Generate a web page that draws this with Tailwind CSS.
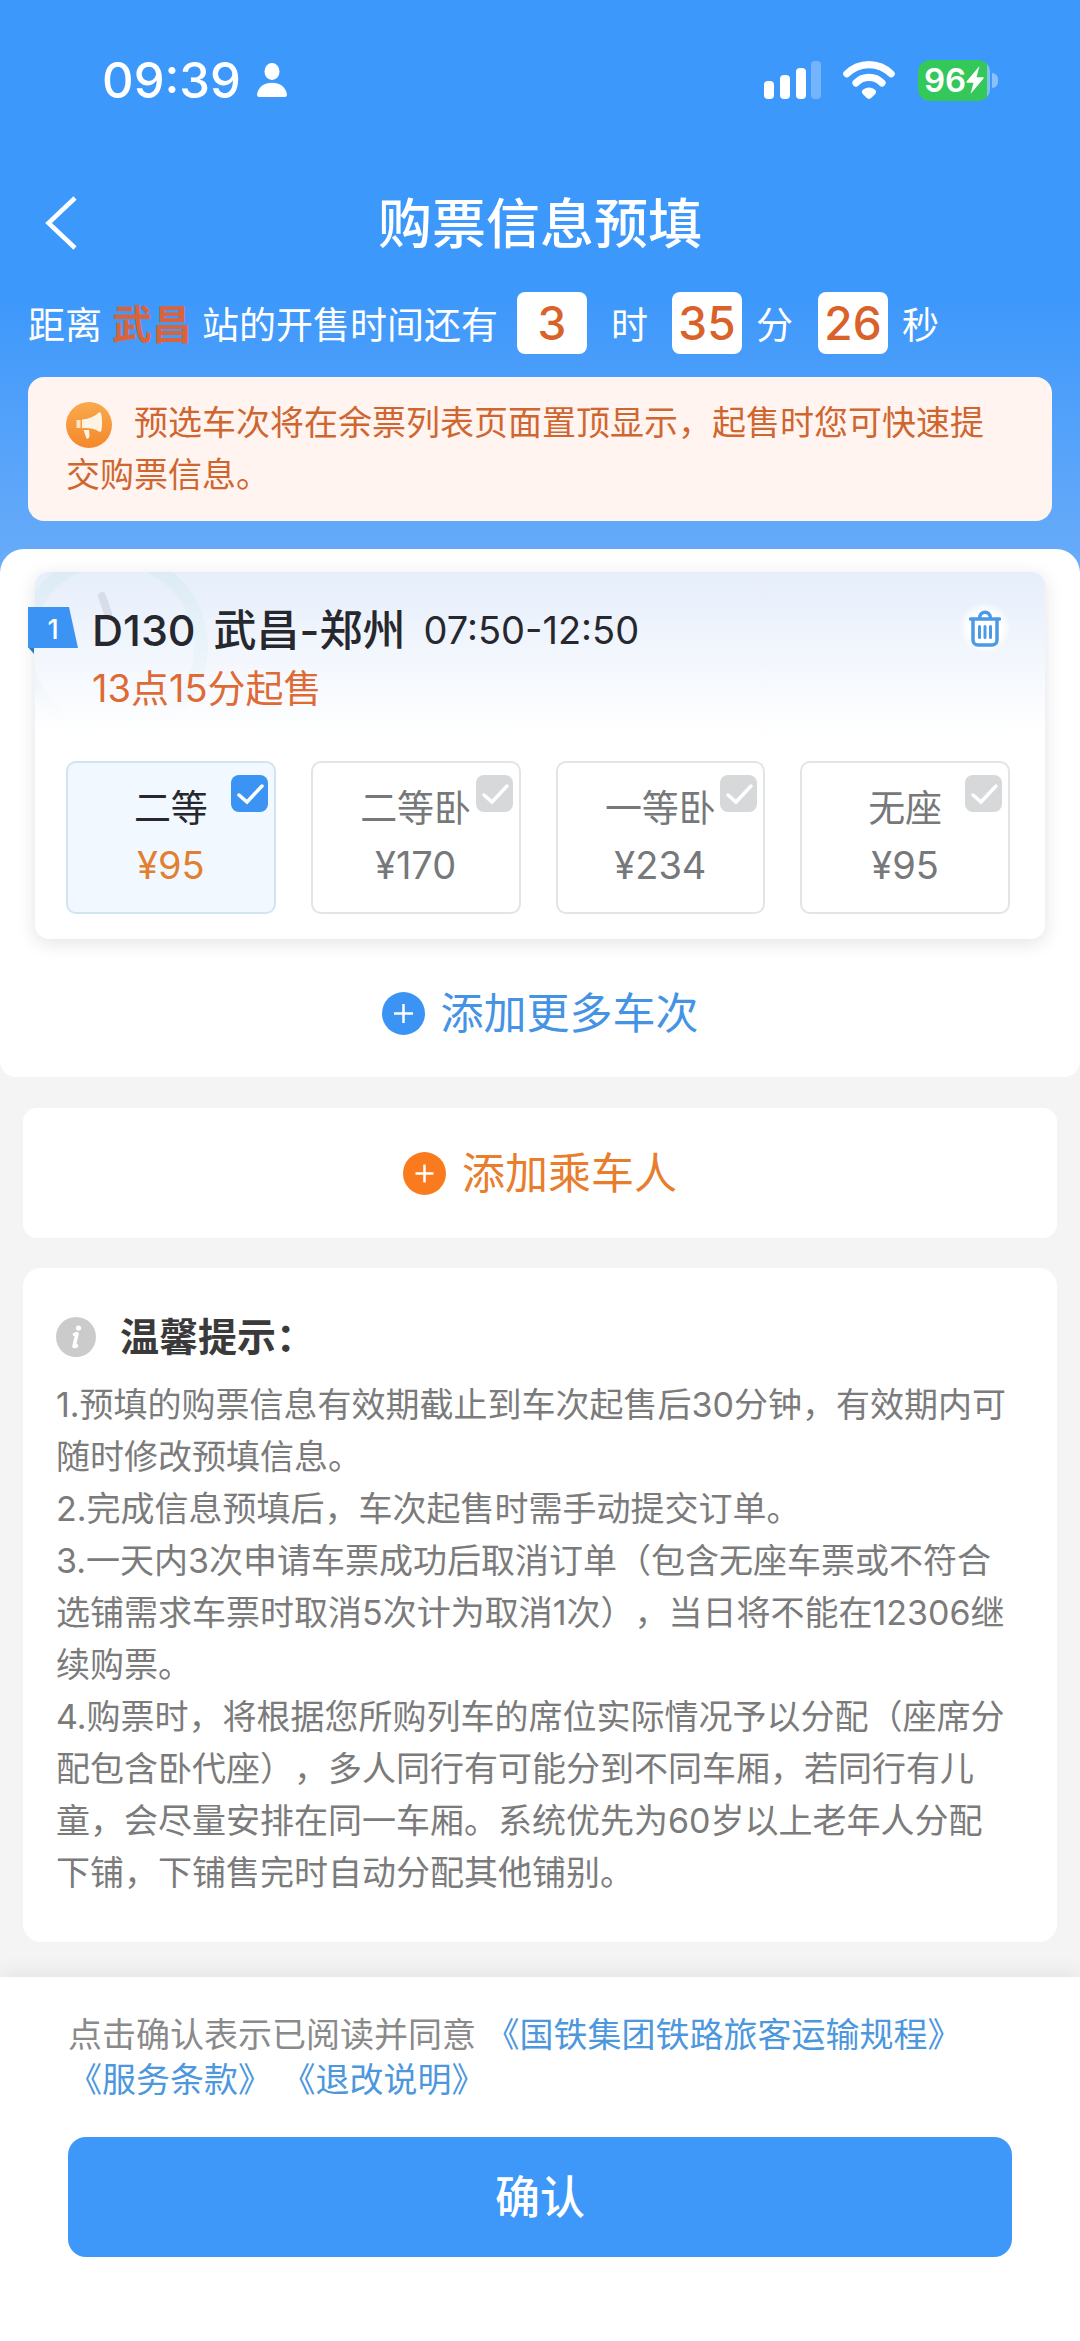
<!DOCTYPE html>
<html lang="zh-CN">
<head>
<meta charset="utf-8">
<meta name="viewport" content="width=device-width, initial-scale=1">
<title>购票信息预填</title>
<script src="https://cdn.jsdelivr.net/npm/@tailwindcss/browser@4"></script>
</head>
<body class="flex min-h-screen flex-col bg-[#f4f4f4] font-[Inter,'Noto_Sans_CJK_SC',sans-serif] [text-spacing-trim:space-all]">

<header class="bg-linear-to-b from-[#3d98fb] from-52% to-[#69acf9] pb-[52px] text-white">
  <!-- Status bar -->
  <div class="flex h-[160px] items-center justify-between pr-[82px] pl-[102px]">
    <div class="flex items-center gap-[15px]">
      <time class="text-[49px] leading-none font-medium">09:39</time>
      <svg class="h-[36px] w-[32px]" viewBox="0 0 34 36" fill="currentColor" aria-hidden="true">
        <ellipse cx="17" cy="9" rx="8" ry="9"/>
        <path d="M3.500 36C1.500 36 .8 34.500 1.200 32.500C3 25 9 21 17 21s14 4 15.800 11.500c.4 2-.3 3.500-2.300 3.500z"/>
      </svg>
    </div>
    <div class="flex items-center">
      <svg class="h-[40px] w-[58px]" viewBox="0 0 58 40" fill="currentColor" aria-label="信号">
        <rect x="0" y="21" width="10" height="18" rx="4"/>
        <rect x="16" y="15" width="10" height="24" rx="4"/>
        <rect x="32" y="8" width="10" height="31" rx="4"/>
        <rect x="47" y="1" width="10" height="38" rx="4" opacity=".28"/>
      </svg>
      <svg class="ml-[21px] h-[40px] w-[52px]" viewBox="0 0 54 40" aria-label="无线网络">
        <path d="M4 13.500C17 .8 37 .8 50 13.500" fill="none" stroke="#fff" stroke-width="7.500" stroke-linecap="round"/>
        <path d="M13.500 23C21 15.500 33 15.500 40.500 23" fill="none" stroke="#fff" stroke-width="7.500" stroke-linecap="round"/>
        <path d="M20.500 30.500C24 27 30 27 33.500 30.500c1.500 1.500 1 3-.5 4.500l-3.500 3.500c-1.500 1.500-3.500 1.500-5 0L21 35c-1.500-1.500-2-3-.5-4.500z" fill="#fff"/>
      </svg>
      <div class="ml-[23px] flex h-[41px] w-[72px] items-center justify-center rounded-[12px] bg-linear-to-r from-[#34c759] from-96% to-[#7fc3e8] to-96% text-[33px] leading-none font-semibold">
        96
        <svg class="h-[28px] w-[18px]" viewBox="0 0 18 28" fill="currentColor" aria-hidden="true"><path d="M13.500 0L.5 15.500c-.5.700-.2 1.200.6 1.200h6.400L4.500 28 17.500 12.500c.5-.7.200-1.200-.6-1.200h-6.400z"/></svg>
      </div>
      <div class="ml-[2px] h-[15px] w-[6px] rounded-r-full bg-white/40"></div>
    </div>
  </div>

  <!-- Title bar -->
  <div class="grid h-[126px] grid-cols-[1fr_auto_1fr] items-center">
    <a href="#" aria-label="返回" class="ml-[44px] w-fit">
      <svg class="h-[54px] w-[34px]" viewBox="0 0 34 54" fill="none" stroke="currentColor" stroke-width="4.500" aria-hidden="true"><path d="M31 2L4.500 27L31 52"/></svg>
    </a>
    <h1 class="pt-1 text-[54px] leading-none font-medium">购票信息预填</h1>
  </div>

  <!-- Countdown -->
  <div class="mt-1.5 flex h-[62px] items-center pl-[28px] text-[37px] leading-none whitespace-nowrap">
    <span class="pt-1">距离</span>
    <strong class="mx-[10px] pt-1 text-[40px] font-bold text-[#d9643c]">武昌</strong>
    <span class="pt-1">站的开售时间还有</span>
    <span class="ml-[19px] flex h-[62px] w-[70px] items-center justify-center rounded-lg bg-white text-[46px] font-medium text-[#d9622b]">3</span>
    <span class="mx-[24px] pt-1">时</span>
    <span class="flex h-[62px] w-[70px] items-center justify-center rounded-lg bg-white text-[46px] font-medium text-[#d9622b]">35</span>
    <span class="mr-[25px] ml-[14px] pt-1">分</span>
    <span class="flex h-[62px] w-[70px] items-center justify-center rounded-lg bg-white text-[46px] font-medium text-[#d9622b]">26</span>
    <span class="ml-[14px] pt-1">秒</span>
  </div>

  <!-- Notice -->
  <p class="mx-[28px] mt-[23px] rounded-2xl bg-[#fff4ef] px-[38px] pt-[20px] pb-[20px] text-[34px] leading-[52px] text-[#d0662f]">
    <svg class="mr-[22px] inline-block size-[46px] align-[-13px]" viewBox="0 0 46 46" aria-hidden="true">
      <defs><linearGradient id="horn" x1="0" y1="0" x2="0" y2="1"><stop offset="0" stop-color="#f9a94d"/><stop offset="1" stop-color="#f5882c"/></linearGradient></defs>
      <circle cx="23" cy="23" r="23" fill="url(#horn)"/>
      <path d="M10.500 18h4v8h-4z" fill="#ffe3c4"/>
      <path d="M16 17.500c6-.3 12-2.500 17-7 1.200-.8 2 0 2.200 1.500 1 5.500 1.200 10.500.3 16-.3 1.800-1.300 2.300-2.600 1.500C28 26.500 22 25.800 16 26.200z" fill="#fff3e4"/>
      <path d="M17.500 28h5.500l.5 5c.1 3-1.700 4.500-3 3.500z" fill="#fff3e4"/>
    </svg>预选车次将在余票列表页面置顶显示，起售时您可快速提交购票信息。
  </p>
</header>

<main>
  <section class="relative -mt-6 rounded-t-[24px] rounded-b-[16px] bg-white pt-[23px]">
    <!-- Train card -->
    <article class="relative mx-[35px] rounded-[14px] bg-white bg-linear-to-b from-[#e6eefb] to-white to-45% pb-[25px] shadow-[0_4px_18px_rgba(40,40,80,0.13)]">
      <div class="absolute inset-0 overflow-hidden rounded-[14px]">
        <svg class="h-[180px] w-[190px]" viewBox="0 0 190 180" fill="none" aria-hidden="true">
          <defs><linearGradient id="dial" x1="0" y1="0" x2="0" y2="1"><stop offset="0" stop-color="#d3e8ee" stop-opacity=".6"/><stop offset=".75" stop-color="#e6f3f8" stop-opacity=".35"/><stop offset="1" stop-color="#fff" stop-opacity="0"/></linearGradient></defs>
          <circle cx="78" cy="74" r="88" stroke="url(#dial)" stroke-width="14"/>
          <path d="M67 24l6 18" stroke="#d8dde9" stroke-width="8" stroke-linecap="round"/>
        </svg>
      </div>
      <div class="absolute top-[35px] -left-[7px] text-white">
        <svg class="h-[47px] w-[50px]" viewBox="0 0 50 47" aria-hidden="true">
          <path d="M0 40h6v7z" fill="#2b7cc4"/>
          <path d="M0 0h41l9 41H0z" fill="#3b94f3"/>
        </svg>
        <span class="absolute inset-x-0 top-[9px] text-center text-[27px] leading-[28px] font-medium">1</span>
      </div>

      <div class="relative flex h-[84px] items-center pt-[32px] pr-[34px] pl-[57px] text-[#26282e]">
        <h2 class="text-[43px] leading-[52px] font-medium">D130</h2>
        <span class="ml-[18px] text-[43px] leading-[52px] font-medium">武昌-郑州</span>
        <span class="ml-[18px] text-[38px] leading-[52px]">07:50-12:50</span>
        <button type="button" aria-label="删除" class="mb-1 ml-auto grid size-[52px] place-items-center rounded-full bg-radial from-white from-45% to-white/0 to-70%">
          <svg class="h-[37px] w-[32px]" viewBox="0 0 32 37" fill="none" stroke="#4c99e6" stroke-width="3.500" stroke-linecap="round" aria-hidden="true">
            <path d="M1.500 9h29M10.500 8.500C10.500 0 21.500 0 21.500 8.500"/>
            <path d="M4 9.500V30a5 5 0 0 0 5 5h14a5 5 0 0 0 5-5V9.500"/>
            <path d="M10.500 16.500v11M16 16.500v11M21.500 16.500v11" stroke-width="3"/>
          </svg>
        </button>
      </div>
      <p class="relative mt-1.5 pl-[57px] text-[38px] leading-[52px] text-[#de6a36]">13点15分起售</p>

      <div class="relative mt-[47px] grid grid-cols-4 gap-[35px] pr-[35px] pl-[31px]">
        <label class="group relative block h-[153px] rounded-[10px] border-2 border-[#e2e4e6] bg-white pt-[17px] text-center text-[37px] leading-[57px] text-[#76787a] has-checked:border-[#d2e4f0] has-checked:bg-[#f2f8ff]">
          <input type="checkbox" checked class="absolute top-[12px] right-[6px] size-[37px] appearance-none rounded-lg bg-[#d7d8d9] checked:bg-[#3b94f3]">
          <svg class="pointer-events-none absolute top-[12px] right-[6px] size-[37px]" viewBox="0 0 37 37" fill="none" stroke="#fff" stroke-width="3.500" stroke-linecap="round" aria-hidden="true"><path d="M8 20l8 7L31 11"/></svg>
          <span class="block group-has-checked:text-[#26282e]">二等</span>
          <span class="block text-[38px] group-has-checked:text-[#e08030]">¥95</span>
        </label>
        <label class="group relative block h-[153px] rounded-[10px] border-2 border-[#e2e4e6] bg-white pt-[17px] text-center text-[37px] leading-[57px] text-[#76787a] has-checked:border-[#d2e4f0] has-checked:bg-[#f2f8ff]">
          <input type="checkbox" class="absolute top-[12px] right-[6px] size-[37px] appearance-none rounded-lg bg-[#d7d8d9] checked:bg-[#3b94f3]">
          <svg class="pointer-events-none absolute top-[12px] right-[6px] size-[37px]" viewBox="0 0 37 37" fill="none" stroke="#fff" stroke-width="3.500" stroke-linecap="round" aria-hidden="true"><path d="M8 20l8 7L31 11"/></svg>
          <span class="block group-has-checked:text-[#26282e]">二等卧</span>
          <span class="block text-[38px] group-has-checked:text-[#e08030]">¥170</span>
        </label>
        <label class="group relative block h-[153px] rounded-[10px] border-2 border-[#e2e4e6] bg-white pt-[17px] text-center text-[37px] leading-[57px] text-[#76787a] has-checked:border-[#d2e4f0] has-checked:bg-[#f2f8ff]">
          <input type="checkbox" class="absolute top-[12px] right-[6px] size-[37px] appearance-none rounded-lg bg-[#d7d8d9] checked:bg-[#3b94f3]">
          <svg class="pointer-events-none absolute top-[12px] right-[6px] size-[37px]" viewBox="0 0 37 37" fill="none" stroke="#fff" stroke-width="3.500" stroke-linecap="round" aria-hidden="true"><path d="M8 20l8 7L31 11"/></svg>
          <span class="block group-has-checked:text-[#26282e]">一等卧</span>
          <span class="block text-[38px] group-has-checked:text-[#e08030]">¥234</span>
        </label>
        <label class="group relative block h-[153px] rounded-[10px] border-2 border-[#e2e4e6] bg-white pt-[17px] text-center text-[37px] leading-[57px] text-[#76787a] has-checked:border-[#d2e4f0] has-checked:bg-[#f2f8ff]">
          <input type="checkbox" class="absolute top-[12px] right-[6px] size-[37px] appearance-none rounded-lg bg-[#d7d8d9] checked:bg-[#3b94f3]">
          <svg class="pointer-events-none absolute top-[12px] right-[6px] size-[37px]" viewBox="0 0 37 37" fill="none" stroke="#fff" stroke-width="3.500" stroke-linecap="round" aria-hidden="true"><path d="M8 20l8 7L31 11"/></svg>
          <span class="block group-has-checked:text-[#26282e]">无座</span>
          <span class="block text-[38px] group-has-checked:text-[#e08030]">¥95</span>
        </label>
      </div>
    </article>

    <button type="button" class="flex h-[138px] w-full items-center justify-center gap-[16px] pt-[10px] text-[43px] leading-[60px] text-[#4593e4]">
      <svg class="size-[43px]" viewBox="0 0 43 43" aria-hidden="true"><circle cx="21.500" cy="21.500" r="21.500" fill="#3b94f3"/><path d="M12 21.500h19M21.500 12v19" stroke="#fff" stroke-width="2.500"/></svg>
      添加更多车次
    </button>
  </section>

  <button type="button" class="mx-[23px] mt-[31px] flex h-[130px] w-[calc(100%-46px)] items-center justify-center gap-[16px] rounded-[14px] bg-white text-[43px] leading-[60px] text-[#e87d2e]">
    <svg class="size-[43px]" viewBox="0 0 43 43" aria-hidden="true"><circle cx="21.500" cy="21.500" r="21.500" fill="#f97b1d"/><path d="M12.500 21.500h18M21.500 12.500v18" stroke="#fff" stroke-width="2.500"/></svg>
    添加乘车人
  </button>

  <!-- Tips -->
  <section class="mx-[23px] mt-[30px] rounded-[18px] bg-white pt-[39px] pr-[43px] pb-[43px] pl-[33px]">
    <h2 class="flex items-center gap-[24px] text-[39px] leading-[60px] font-bold text-[#3a3a3a]">
      <svg class="size-[40px]" viewBox="0 0 40 40" aria-hidden="true"><circle cx="20" cy="20" r="20" fill="#cbcbcb"/><circle cx="22.500" cy="11" r="2.600" fill="#fff"/><path d="M18.500 17.500l2.500-.7L18 29.500l2.500-.6" fill="none" stroke="#fff" stroke-width="3.600" stroke-linecap="round" stroke-linejoin="round"/></svg>
      温馨提示：
    </h2>
    <ol class="mt-3 text-[34px] leading-[52px] text-[#7b7b7b]">
      <li>1.预填的购票信息有效期截止到车次起售后30分钟，有效期内可随时修改预填信息。</li>
      <li>2.完成信息预填后，车次起售时需手动提交订单。</li>
      <li>3.一天内3次申请车票成功后取消订单（包含无座车票或不符合选铺需求车票时取消5次计为取消1次），当日将不能在12306继续购票。</li>
      <li>4.购票时，将根据您所购列车的席位实际情况予以分配（座席分配包含卧代座），多人同行有可能分到不同车厢，若同行有儿童，会尽量安排在同一车厢。系统优先为60岁以上老年人分配下铺，下铺售完时自动分配其他铺别。</li>
    </ol>
  </section>
</main>

<footer class="mt-[35px] grow bg-white px-[68px] pt-[35px] pb-[84px] shadow-[0_-4px_20px_rgba(0,0,0,0.07)]">
  <p class="text-[34px] leading-[45px] text-[#8a8a8a]">点击确认表示已阅读并同意 <a href="#" class="text-[#4d97dc]">《国铁集团铁路旅客运输规程》</a> <a href="#" class="text-[#4d97dc]">《服务条款》</a> <a href="#" class="text-[#4d97dc]">《退改说明》</a></p>
  <button type="button" class="mt-[35px] h-[120px] w-full rounded-[18px] bg-[#3d98f9] text-[45px] leading-none font-medium text-white">确认</button>
</footer>

</body>
</html>
